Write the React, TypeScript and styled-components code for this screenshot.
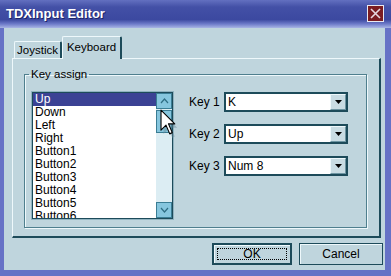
import styled, { createGlobalStyle } from "styled-components";

const GlobalStyle = createGlobalStyle`
  html, body {
    margin: 0;
    padding: 0;
    background: #bfd5dd;
  }
  body {
    font-family: "Liberation Sans", Arial, sans-serif;
    font-size: 11px;
    color: #000;
  }
`;

const dark = "#1d4b5a";
const light = "#eef8fb";
const face = "#bfd5dd";

const Window = styled.div`
  position: relative;
  width: 391px;
  height: 276px;
  display: flex;
  flex-direction: column;
  overflow: hidden;
`;

const TitleBar = styled.div`
  height: 28px;
  flex: none;
  display: flex;
  align-items: center;
  justify-content: space-between;
  padding: 0 7px 2px 6px;
  box-sizing: border-box;
  background: linear-gradient(
    to bottom,
    #6370c0 0%,
    #4350a6 25%,
    #3c49a0 70%,
    #6f7cca 86%,
    #a9b5e4 100%
  );
`;

const Title = styled.span`
  color: #fff;
  font-weight: bold;
  font-size: 13px;
  text-shadow: 1px 1px 0 #1c2468;
`;

const CloseBox = styled.div`
  width: 15px;
  height: 15px;
  background: #7a1c22;
  border: 1px solid #e8e8f0;
  display: flex;
  align-items: center;
  justify-content: center;
`;

const Frame = styled.div`
  flex: 1;
  display: flex;
  flex-direction: column;
  background: ${face};
  border-left: 4px solid #6672c6;
  border-right: 6px solid #6672c6;
  border-bottom: 6px solid #6672c6;
  padding: 8px 4px 0 8px;
`;

const Tabs = styled.div`
  height: 22px;
  display: flex;
  align-items: flex-end;
  padding-left: 2px;
`;

const Tab = styled.div<{ $active?: boolean; $w: number }>`
  box-sizing: border-box;
  width: ${(p) => p.$w}px;
  height: ${(p) => (p.$active ? 23 : 17)}px;
  margin-bottom: ${(p) => (p.$active ? -1 : 0)}px;
  padding-top: ${(p) => (p.$active ? 4 : 2)}px;
  text-align: center;
  background: ${face};
  border-top: 1px solid ${light};
  border-left: 1px solid ${light};
  border-right: 2px solid ${dark};
  border-radius: 2px 2px 0 0;
  position: relative;
  z-index: ${(p) => (p.$active ? 1 : 0)};
  font-size: 11.5px;
  white-space: nowrap;
`;

const Panel = styled.div`
  height: 180px;
  box-sizing: border-box;
  border-top: 1px solid ${light};
  border-left: 1px solid ${light};
  border-right: 2px solid ${dark};
  border-bottom: 2px solid ${dark};
  padding: 9px 12px 8px 11px;
  display: flex;
`;

const GroupBox = styled.fieldset`
  flex: 1;
  margin: 0;
  padding: 11px 7px 0 7px;
  border: 1px solid #4f7f8e;
  box-shadow: inset 1px 1px 0 ${light}, 1px 1px 0 ${light};
`;

const Legend = styled.legend`
  padding: 0 2px;
  margin-left: -3px;
  font-size: 11.5px;
  line-height: 13px;
`;

const Row = styled.div`
  display: flex;
  align-items: flex-start;
`;

const ListBox = styled.div`
  width: 141px;
  height: 127px;
  box-sizing: border-box;
  border: 1px solid ${dark};
  box-shadow: 0 0 0 1px #8fb3c0;
  background: #fff;
  display: flex;
`;

const Items = styled.div`
  flex: 1;
  overflow: hidden;
`;

const Item = styled.div<{ $selected?: boolean }>`
  height: 13px;
  line-height: 13px;
  padding-left: 2px;
  font-size: 12px;
  background: ${(p) => (p.$selected ? "#3b4294" : "transparent")};
  color: ${(p) => (p.$selected ? "#fff" : "#000")};
  white-space: nowrap;
`;

const ScrollBar = styled.div`
  width: 16px;
  flex: none;
  background: #dcedf3;
  display: flex;
  flex-direction: column;
  justify-content: space-between;
  position: relative;
`;

const ScrollButton = styled.div`
  width: 16px;
  height: 16px;
  box-sizing: border-box;
  background: #86c6de;
  border: 1px solid #3a7d94;
  display: flex;
  align-items: center;
  justify-content: center;
`;

const Thumb = styled.div`
  position: absolute;
  left: 0;
  top: 17px;
  width: 16px;
  height: 23px;
  box-sizing: border-box;
  background: #86c6de;
  border: 1px solid #3a7d94;
  display: flex;
  align-items: center;
  justify-content: center;
`;

const Keys = styled.div`
  margin-left: 16px;
  display: flex;
  flex-direction: column;
  gap: 12px;
`;

const KeyRow = styled.div`
  display: flex;
  align-items: center;
`;

const KeyLabel = styled.span`
  width: 35px;
  font-size: 12px;
`;

const Combo = styled.div`
  width: 124px;
  height: 20px;
  box-sizing: border-box;
  border: 2px solid ${dark};
  background: #fff;
  display: flex;
  align-items: center;
`;

const ComboText = styled.span`
  flex: 1;
  padding-left: 2px;
  font-size: 12px;
`;

const ComboButton = styled.div`
  width: 16px;
  height: 16px;
  box-sizing: border-box;
  background: #c9dce3;
  border-left: 1px solid ${light};
  border-top: 1px solid ${light};
  border-right: 1px solid #6d95a2;
  border-bottom: 1px solid #6d95a2;
  display: flex;
  align-items: center;
  justify-content: center;
`;

const Footer = styled.div`
  display: flex;
  justify-content: flex-end;
  gap: 7px;
  margin-top: 5px;
  margin-right: -2px;
`;

const Button = styled.div<{ $default?: boolean; $w: number }>`
  width: ${(p) => p.$w}px;
  height: 22px;
  box-sizing: border-box;
  background: ${face};
  border: ${(p) => (p.$default ? 2 : 1)}px solid ${dark};
  box-shadow: inset 1px 1px 0 ${light};
  display: flex;
  align-items: center;
  justify-content: center;
  font-size: 12px;
`;

const Focus = styled.div`
  width: calc(100% - 6px);
  height: calc(100% - 6px);
  border: 1px dotted #000;
  box-sizing: border-box;
  display: flex;
  align-items: center;
  justify-content: center;
`;

const Cursor = styled.svg`
  position: absolute;
  left: 161px;
  top: 110px;
  overflow: visible;
`;

const Down = ({ color = "#000" }: { color?: string }) => (
  <svg width="7" height="4" viewBox="0 0 7 4">
    <path d="M0 0 H7 L3.5 4 Z" fill={color} />
  </svg>
);

const Chevron = ({ up }: { up?: boolean }) => (
  <svg width="9" height="6" viewBox="0 0 9 6">
    <path
      d={up ? "M1 5 L4.5 1 L8 5" : "M1 1 L4.5 5 L8 1"}
      fill="none"
      stroke="#2f6e84"
      strokeWidth="1.2"
    />
  </svg>
);

const items = [
  "Up",
  "Down",
  "Left",
  "Right",
  "Button1",
  "Button2",
  "Button3",
  "Button4",
  "Button5",
  "Button6",
];

const keys = [
  { label: "Key 1", value: "K" },
  { label: "Key 2", value: "Up" },
  { label: "Key 3", value: "Num 8" },
];

export default function App() {
  return (
    <Window>
      <GlobalStyle />
      <TitleBar>
        <Title>TDXInput Editor</Title>
        <CloseBox>
          <svg width="11" height="11" viewBox="0 0 11 11">
            <path d="M1 1 L10 10 M10 1 L1 10" stroke="#e6d8e0" strokeWidth="1.6" />
          </svg>
        </CloseBox>
      </TitleBar>
      <Frame>
        <Tabs>
          <Tab $w={48}>Joystick</Tab>
          <Tab $w={60} $active>
            Keyboard
          </Tab>
        </Tabs>
        <Panel>
          <GroupBox>
            <Legend>Key assign</Legend>
            <Row>
              <ListBox>
                <Items>
                  {items.map((it, i) => (
                    <Item key={it} $selected={i === 0}>
                      {it}
                    </Item>
                  ))}
                </Items>
                <ScrollBar>
                  <ScrollButton>
                    <Chevron up />
                  </ScrollButton>
                  <Thumb>
                    <svg width="6" height="7" viewBox="0 0 6 7">
                      <path d="M0 1 H6 M0 3.5 H6 M0 6 H6" stroke="#2f6e84" strokeWidth="1" />
                    </svg>
                  </Thumb>
                  <ScrollButton>
                    <Chevron />
                  </ScrollButton>
                </ScrollBar>
              </ListBox>
              <Keys>
                {keys.map((k) => (
                  <KeyRow key={k.label}>
                    <KeyLabel>{k.label}</KeyLabel>
                    <Combo>
                      <ComboText>{k.value}</ComboText>
                      <ComboButton>
                        <Down />
                      </ComboButton>
                    </Combo>
                  </KeyRow>
                ))}
              </Keys>
            </Row>
          </GroupBox>
        </Panel>
        <Footer>
          <Button $default $w={80}>
            <Focus>OK</Focus>
          </Button>
          <Button $w={84}>Cancel</Button>
        </Footer>
      </Frame>
      <Cursor width="15" height="24" viewBox="0 0 12 19">
        <path
          d="M2 3 L2 19 L6 15 L9 22 L11 21 L8 14 L13 14 Z"
          fill="#6a8a98"
          opacity="0.45"
        />
        <path
          d="M0 0 L0 16 L4 12 L7 19 L9 18 L6 11 L11 11 Z"
          fill="#fff"
          stroke="#000"
          strokeWidth="0.9"
          strokeLinejoin="round"
        />
      </Cursor>
    </Window>
  );
}
